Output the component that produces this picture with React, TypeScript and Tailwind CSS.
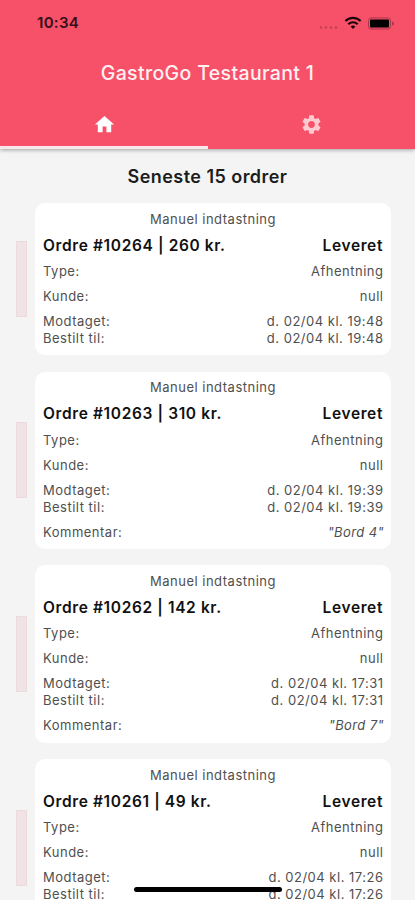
import React from 'react';
import { MdHome, MdSettings } from 'react-icons/md';

type Order = { id: number; price: number; time: string; comment?: string };

const orders: Order[] = [
  { id: 10264, price: 260, time: '19:48' },
  { id: 10263, price: 310, time: '19:39', comment: 'Bord 4' },
  { id: 10262, price: 142, time: '17:31', comment: 'Bord 7' },
  { id: 10261, price: 49, time: '17:26', comment: 'Bord 2' },
];

function Row({ label, value, italic }: { label: string; value: string; italic?: boolean }) {
  return (
    <div className="flex h-[17px] items-center justify-between">
      <span>{label}</span>
      <span className={italic ? '-mr-[1px] italic tracking-[0.4px]' : '-mr-[0.5px]'}>{value}</span>
    </div>
  );
}

function OrderCard({ order }: { order: Order }) {
  return (
    <div className="flex shrink-0 items-center pl-[16px] pr-[24px]">
      <div className="mr-[8px] h-[76px] w-[11px] shrink-0 border border-[#ecdadd] bg-[#efe3e5]" />
      <div className="flex grow flex-col rounded-[10px] bg-white px-[8px] pb-[8.2px] pt-[7.5px] text-[13px] leading-[17px] tracking-[0.5px] text-[#4f4f4f]">
        <div className="text-center">Manuel indtastning</div>
        <div className="mb-[9.3px] mt-[9.2px] flex justify-between text-[15.5px] font-semibold tracking-[0.62px] text-[#111]">
          <span>Ordre #{order.id} | {order.price} kr.</span>
          <span>Leveret</span>
        </div>
        <div className="flex flex-col gap-[8px]">
          <Row label="Type:" value="Afhentning" />
          <Row label="Kunde:" value="null" />
          <div>
            <Row label="Modtaget:" value={`d. 02/04 kl. ${order.time}`} />
            <Row label="Bestilt til:" value={`d. 02/04 kl. ${order.time}`} />
          </div>
          {order.comment && <Row label="Kommentar:" value={`"${order.comment}"`} italic />}
        </div>
      </div>
    </div>
  );
}

function StatusBar() {
  return (
    <div className="flex h-[47px] items-center justify-between pl-[37px] pr-[20px]">
      <span className="text-[15px] font-semibold tracking-[0.3px] text-[#35101a]">10:34</span>
      <svg width="78" height="16" viewBox="0 0 78 16" fill="none">
        <g fill="#c23f54">
          <circle cx="4" cy="11.5" r="1.2" />
          <circle cx="9" cy="11.5" r="1.2" />
          <circle cx="14" cy="11.5" r="1.2" />
          <circle cx="19" cy="11.5" r="1.2" />
        </g>
        <g stroke="#1c060b" strokeWidth="2.1">
          <path d="M28.4 5.1a10.6 10.6 0 0 1 15.2 0" />
          <path d="M31.3 8.2a6.6 6.6 0 0 1 9.4 0" />
        </g>
        <path d="M33.6 10.6a3.4 3.4 0 0 1 4.8 0l-2.4 2.5z" fill="#1c060b" />
        <rect x="51.5" y="2" width="22" height="11" rx="2.5" stroke="#a93649" />
        <rect x="53" y="3.5" width="19" height="8" rx="1" fill="#000" />
        <path d="M75 5.5v4q2-.7 2-2t-2-2z" fill="#a93649" />
      </svg>
    </div>
  );
}

export default function App() {
  return (
    <div className="relative flex h-[900px] w-[415px] flex-col overflow-hidden bg-[#f4f4f4] font-['Inter',sans-serif]">
      <header className="z-10 flex h-[149px] shrink-0 flex-col bg-[#f65168] shadow-[0_1px_4px_rgba(0,0,0,0.35)]">
        <StatusBar />
        <h1 className="flex h-[53px] items-center justify-center text-[19.5px] font-medium tracking-[0.35px] text-[#fff0f2]">
          GastroGo Testaurant 1
        </h1>
        <nav className="flex grow">
          <div className="flex w-[208px] justify-center border-b-[3px] border-[#f5e9eb] pt-[12.5px]">
            <MdHome size={23} color="#fff" />
          </div>
          <div className="flex w-[207px] justify-center pt-[12.5px]">
            <MdSettings size={23} color="#ffc9d0" />
          </div>
        </nav>
      </header>
      <main className="flex flex-col gap-[16.5px]">
        <h2 className="flex h-[37.5px] shrink-0 items-end justify-center text-[18px] font-semibold leading-[21px] tracking-[0.45px] text-[#1c1c1c]">
          Seneste 15 ordrer
        </h2>
        {orders.map((o) => <OrderCard key={o.id} order={o} />)}
      </main>
      <div className="absolute bottom-[8px] left-[134px] h-[5px] w-[148px] rounded-full bg-black" />
    </div>
  );
}
